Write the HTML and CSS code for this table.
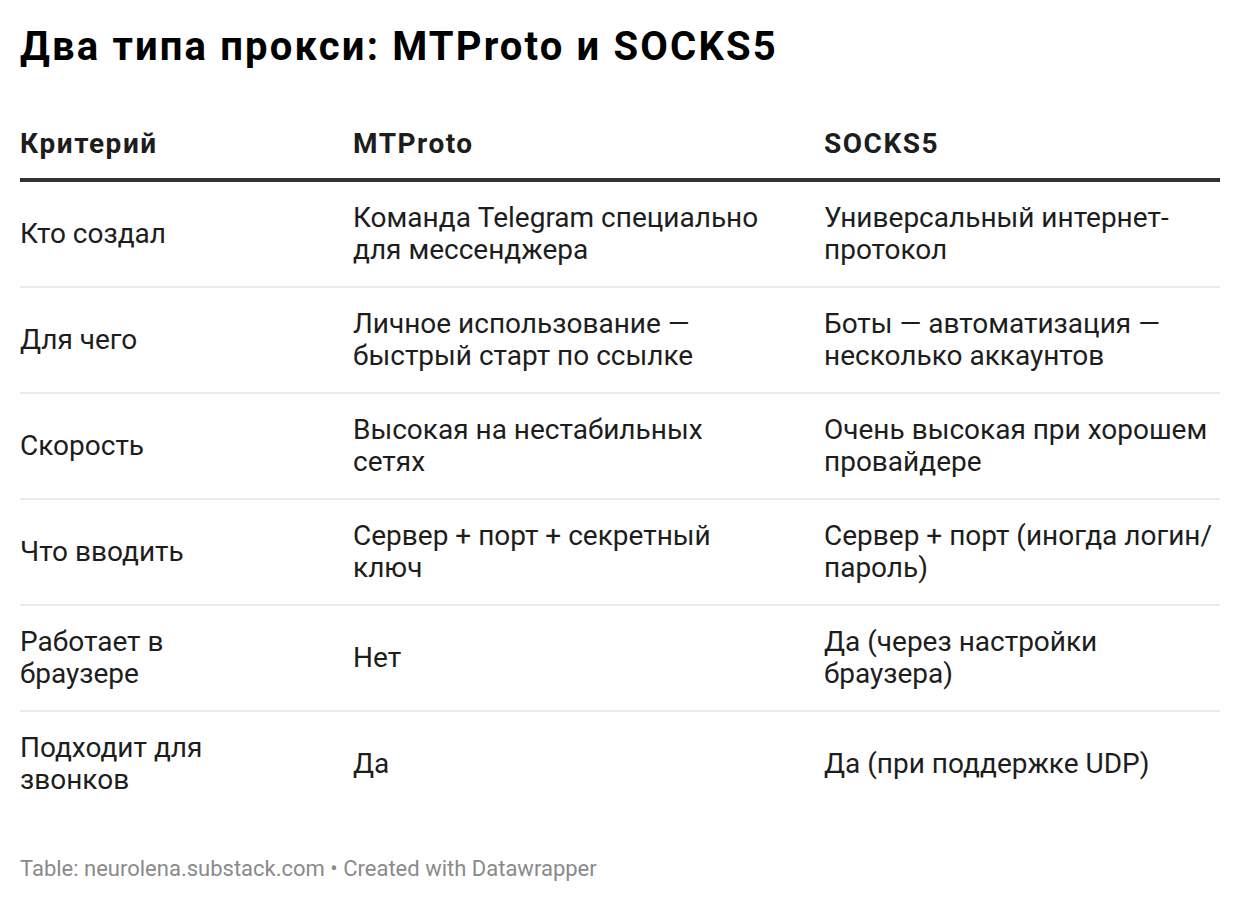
FILE: index.html
```html
<!DOCTYPE html>
<html lang="ru">
<head>
<meta charset="utf-8">
<title>Два типа прокси: MTProto и SOCKS5</title>
<link rel="stylesheet" href="styles.css">
</head>
<body>
<div class="chart">
  <h1 class="title">Два типа прокси: MTProto и SOCKS5</h1>
  <table class="table">
    <colgroup>
      <col class="c1"><col class="c2"><col class="c3">
    </colgroup>
    <thead>
      <tr>
        <th class="cell-a">Критерий</th>
        <th class="cell-b">MTProto</th>
        <th class="cell-c">SOCKS5</th>
      </tr>
    </thead>
    <tbody>
      <tr>
        <td class="cell-a">Кто создал</td>
        <td class="cell-b">Команда Telegram специально для мессенджера</td>
        <td class="cell-c">Универсальный интернет-протокол</td>
      </tr>
      <tr>
        <td class="cell-a">Для чего</td>
        <td class="cell-b">Личное использование — быстрый старт по ссылке</td>
        <td class="cell-c">Боты — автоматизация — несколько аккаунтов</td>
      </tr>
      <tr>
        <td class="cell-a">Скорость</td>
        <td class="cell-b">Высокая на нестабильных сетях</td>
        <td class="cell-c">Очень высокая при хорошем провайдере</td>
      </tr>
      <tr>
        <td class="cell-a">Что вводить</td>
        <td class="cell-b">Сервер + порт + секретный ключ</td>
        <td class="cell-c">Сервер + порт (иногда логин/пароль)</td>
      </tr>
      <tr>
        <td class="cell-a">Работает в браузере</td>
        <td class="cell-b">Нет</td>
        <td class="cell-c">Да (через настройки браузера)</td>
      </tr>
      <tr>
        <td class="cell-a">Подходит для звонков</td>
        <td class="cell-b">Да</td>
        <td class="cell-c">Да (при поддержке UDP)</td>
      </tr>
    </tbody>
  </table>
  <p class="footer">Table: neurolena.substack.com • Created with Datawrapper</p>
</div>
</body>
</html>
```
FILE: styles.css
```css
html, body {
  margin: 0;
  padding: 0;
  background: #ffffff;
}

body {
  font-family: Roboto, "Liberation Sans", Arial, sans-serif;
  color: #1d1d1d;
}

.chart {
  padding: 23px 20px 0 20px;
}

.title {
  margin: 0;
  font-size: 40px;
  font-weight: 700;
  line-height: 48px;
  letter-spacing: 0.054em;
  color: #000000;
}

.table {
  margin-top: 34px;
  width: 1200px;
  border-collapse: collapse;
  table-layout: fixed;
  font-size: 28px;
  line-height: 32px;
}

.c1 { width: 333px; }
.c2 { width: 471px; }
.c3 { width: 396px; }

.table th {
  text-align: left;
  font-weight: 700;
  letter-spacing: 0.054em;
  padding: 23px 0 18px 0;
  border-bottom: 4px solid #333333;
  color: #1d1d1d;
}

.table td {
  text-align: left;
  vertical-align: middle;
  padding: 20px 0;
  border-bottom: 2px solid #ebebeb;
  color: #1d1d1d;
}

.table tbody tr:last-child td {
  border-bottom: none;
}

.cell-a { padding-right: 93px !important; }
.cell-b { padding-right: 56px !important; }
.cell-c { padding-right: 0 !important; }

.footer {
  margin: 40px 0 0 0;
  font-size: 22px;
  line-height: 26px;
  color: #8a8a8a;
}
```
